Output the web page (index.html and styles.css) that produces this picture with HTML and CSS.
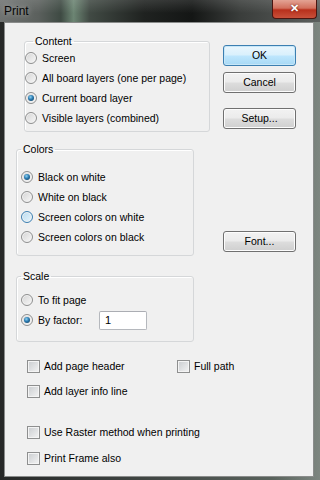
FILE: index.html
```html
<!DOCTYPE html>
<html>
<head>
    <meta charset="utf-8">
    <title>Print</title>
    <link rel="stylesheet" href="styles.css">
</head>
<body>
    <div class="window">
        <div class="titlebar">
            <span class="title">Print</span>
            <span class="close">&#x2715;</span>
        </div>

        <div class="client">
            <div class="layout">
                <div class="left">
                    <fieldset class="group group-content">
                        <legend>Content</legend>
                        <div class="opt"><span class="radio"></span>Screen</div>
                        <div class="opt"><span class="radio"></span>All board layers (one per page)</div>
                        <div class="opt"><span class="radio checked"></span>Current board layer</div>
                        <div class="opt"><span class="radio"></span>Visible layers (combined)</div>
                    </fieldset>

                    <fieldset class="group group-colors">
                        <legend>Colors</legend>
                        <div class="opt"><span class="radio checked"></span>Black on white</div>
                        <div class="opt"><span class="radio"></span>White on black</div>
                        <div class="opt"><span class="radio hover"></span>Screen colors on white</div>
                        <div class="opt"><span class="radio"></span>Screen colors on black</div>
                    </fieldset>

                    <fieldset class="group group-scale">
                        <legend>Scale</legend>
                        <div class="opt"><span class="radio"></span>To fit page</div>
                        <div class="opt"><span class="radio checked"></span><span class="factor-label">By factor:</span><span class="field">1</span></div>
                    </fieldset>
                </div>

                <div class="buttons">
                    <div class="btn btn-default btn-ok">OK</div>
                    <div class="btn btn-cancel">Cancel</div>
                    <div class="btn btn-setup">Setup...</div>
                    <div class="btn btn-font">Font...</div>
                </div>
            </div>

            <div class="checks">
                <div class="chk"><span class="box"></span>Add page header</div>
                <div class="chk"><span class="box"></span>Full path</div>
                <div class="chk"><span class="box"></span>Add layer info line</div>
            </div>

            <div class="checks checks-lower">
                <div class="chk"><span class="box"></span>Use Raster method when printing</div>
                <div class="chk"><span class="box"></span>Print Frame also</div>
            </div>
        </div>
    </div>
</body>
</html>
```

FILE: styles.css
```css
body {
    margin: 0;
    font-family: "Liberation Sans", Arial, sans-serif;
    font-size: 10.5px;
    color: #000;
}

.window {
    width: 320px;
    height: 480px;
    display: flex;
    flex-direction: column;
    background: linear-gradient(to right, #262827 0%, #3d4240 40%, #59625c 85%, #7d8680 100%);
}

.titlebar {
    height: 22px;
    display: flex;
    align-items: flex-start;
    background:
        linear-gradient(to bottom, rgba(255, 255, 255, 0.12), rgba(0, 0, 0, 0) 60%),
        linear-gradient(to right, #6f7271 0%, #5b605d 12%, #3e4a43 19%, #6c8573 23%, #414a44 28%, #1f2220 45%, #141615 60%, #3a3d3b 75%, #5c605e 100%);
}

.title {
    margin: 4px 0 0 4px;
    font-size: 12px;
    color: #050505;
    text-shadow: 0 0 6px rgba(255, 255, 255, 0.55);
}

.close {
    margin-left: auto;
    margin-right: 3px;
    width: 43px;
    height: 18px;
    border: 1px solid #4a1510;
    border-top: 0;
    border-radius: 0 0 4px 4px;
    background: linear-gradient(to bottom, #e3a394 0%, #d2705d 45%, #b8301c 55%, #c9503a 100%);
    color: #fff;
    font-size: 11px;
    font-weight: bold;
    text-align: center;
    line-height: 17px;
    text-shadow: 0 0 2px #5a1008;
}

.client {
    flex: 1;
    margin: 0 6px 3px 4px;
    border: 1px solid #8a8c8b;
    background: #f0f0f0;
}

.layout {
    display: flex;
}

.left {
    width: 218px;
}

.group {
    margin: 0;
    padding: 0;
    border: 1px solid #d5d7d9;
    border-radius: 3px;
    box-shadow: inset 1px 1px 0 #fff;
}

.group legend {
    padding: 0 2px;
    line-height: 13px;
}

.group-content {
    width: 184px;
    margin: 12px 0 0 19px;
    padding: 0 0 3px 0;
}

.group-content legend {
    margin-left: 8px;
}

.group-colors {
    width: 172px;
    margin: 11px 0 0 11px;
    padding: 11px 0 8px 4px;
}

.group-scale {
    width: 172px;
    margin: 14px 0 0 11px;
    padding: 7px 0 11px 4px;
}

.group-colors legend,
.group-scale legend {
    margin-left: 0;
}

.opt {
    height: 20px;
    display: flex;
    align-items: center;
}

.radio {
    position: relative;
    box-sizing: border-box;
    width: 12px;
    height: 12px;
    margin-right: 5px;
    border: 1px solid #8e8f8f;
    border-radius: 50%;
    background: linear-gradient(135deg, #d4d4d4, #f8f8f8);
    box-shadow: inset 0 0 0 1px #f3f3f3;
}

.radio.hover {
    border-color: #3c7fb1;
    background: linear-gradient(135deg, #b9dcf0, #e8f5fc);
}

.radio.checked::after {
    content: "";
    position: absolute;
    left: 2px;
    top: 2px;
    width: 6px;
    height: 6px;
    border-radius: 50%;
    background: radial-gradient(circle at 40% 35%, #8fd3f3 0%, #2a7ab0 45%, #0f3550 100%);
}

.factor-label {
    width: 61px;
}

.field {
    box-sizing: border-box;
    width: 48px;
    height: 19px;
    padding: 2px 0 0 5px;
    border: 1px solid #b5b8bd;
    border-top-color: #abadb3;
    border-radius: 2px;
    background: #fff;
    font-size: 11px;
}

.buttons {
    display: flex;
    flex-direction: column;
    width: 73px;
}

.btn {
    box-sizing: border-box;
    height: 21px;
    border: 1px solid #707070;
    border-radius: 3px;
    background: linear-gradient(to bottom, #f2f2f2 0%, #ebebeb 48%, #dddddd 52%, #cfcfcf 100%);
    box-shadow: inset 0 0 0 1px #fcfcfc;
    text-align: center;
    line-height: 19px;
}

.btn-default {
    border-color: #3c7fb1;
    background: linear-gradient(to bottom, #eaf6fd 0%, #d9f0fc 48%, #bee6fd 52%, #a7d9f5 100%);
    box-shadow: inset 0 0 0 1px #c7e7f8;
}

.btn-ok {
    margin-top: 22px;
}

.btn-cancel {
    margin-top: 6px;
}

.btn-setup {
    margin-top: 15px;
}

.btn-font {
    margin-top: 102px;
}

.checks {
    display: grid;
    grid-template-columns: 150px auto;
    row-gap: 5px;
    margin: 14px 0 0 22px;
}

.checks-lower {
    grid-template-columns: auto;
    row-gap: 6px;
    margin-top: 21px;
}

.chk {
    height: 20px;
    display: flex;
    align-items: center;
}

.box {
    box-sizing: border-box;
    width: 13px;
    height: 13px;
    margin-right: 4px;
    border: 1px solid #8e8f8f;
    background: linear-gradient(135deg, #c9cccf, #f4f4f4);
    box-shadow: inset 0 0 0 1px #f4f4f4;
}
```
